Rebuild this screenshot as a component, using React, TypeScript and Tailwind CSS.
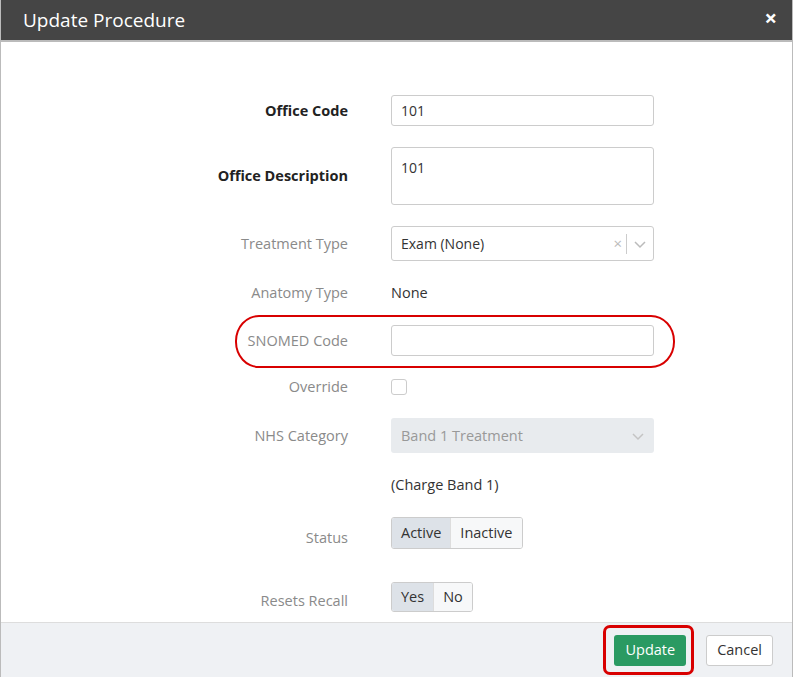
import React from "react";

const Row = ({ label, bold, h, lt = 0, mt = 0, children }: { label: string; bold?: boolean; h: number; lt?: number; mt?: number; children: React.ReactNode }) => (
  <div className="flex items-center" style={{ height: h, marginTop: mt }}>
    <div className={`w-[347px] text-right text-[14.5px] ${bold ? "font-bold text-[#222]" : "text-[#8a8a8a]"}`} style={{ marginTop: lt }}>{label}</div>
    <div className="ml-[43px] w-[263px] h-full flex items-center">{children}</div>
  </div>
);

export default function App() {
  return (
    <div className="w-[793px] h-[677px] flex flex-col bg-white border-x border-[#bbb] text-[#333]" style={{ fontFamily: '"Open Sans", sans-serif' }}>
      <div className="h-[42px] bg-[#454545] border-b-2 border-[#bbb] flex items-center justify-between pl-[22px] pr-[15px] shrink-0">
        <span className="text-white text-[19px]">Update Procedure</span>
        <span className="text-white text-[22px] font-bold leading-none -mt-[6px]">×</span>
      </div>
      <div className="relative flex-1 flex flex-col gap-[21px] pt-[53px]">
        <Row label="Office Code" bold h={31}>
          <div className="w-full h-full border border-[#ccc] rounded-[3px] px-[9px] flex items-center text-[14px]">101</div>
        </Row>
        <Row label="Office Description" bold h={58}>
          <div className="w-full h-full border border-[#ccc] rounded-[3px] px-[9px] pt-[9px] text-[14px]">101</div>
        </Row>
        <Row label="Treatment Type" h={35}>
          <div className="w-full h-full border border-[#ccc] rounded-[3px] pl-[9px] flex items-center text-[14px]">
            <span className="flex-1">Exam (None)</span>
            <span className="text-[#bbb] text-[15px] px-[4px]">×</span>
            <span className="w-px h-[20px] bg-[#ccc]" />
            <svg width="26" height="12" viewBox="0 0 26 12"><path d="M8 4l5 5 5-5" stroke="#bbb" strokeWidth="1.5" fill="none" /></svg>
          </div>
        </Row>
        <Row label="Anatomy Type" h={22}>
          <span className="text-[14.5px]">None</span>
        </Row>
        <Row label="SNOMED Code" h={31}>
          <div className="w-full h-full border border-[#ccc] rounded-[3px]" />
        </Row>
        <Row label="Override" h={20}>
          <div className="w-[16px] h-[16px] border border-[#ccc] rounded-[3px]" />
        </Row>
        <Row label="NHS Category" h={35}>
          <div className="w-full h-full bg-[#e8ebee] rounded-[3px] pl-[10px] pr-[8px] flex items-center text-[14.5px] text-[#999]">
            <span className="flex-1">Band 1 Treatment</span>
            <svg width="16" height="12" viewBox="0 0 16 12"><path d="M3 4l5 5 5-5" stroke="#c4c4c4" strokeWidth="1.5" fill="none" /></svg>
          </div>
        </Row>
        <Row label="" h={22}>
          <span className="text-[14.5px]">(Charge Band 1)</span>
        </Row>
        <Row label="Status" h={32} lt={10}>
          <div className="flex h-full border border-[#ccc] rounded-[3px] overflow-hidden text-[14.5px]">
            <span className="px-[9px] bg-[#dde2e8] flex items-center">Active</span>
            <span className="px-[9px] bg-[#f7f8f9] border-l border-[#ddd] flex items-center">Inactive</span>
          </div>
        </Row>
        <Row label="Resets Recall" h={30} lt={8} mt={12}>
          <div className="flex h-full border border-[#ccc] rounded-[3px] overflow-hidden text-[14.5px]">
            <span className="px-[9px] bg-[#dde2e8] flex items-center">Yes</span>
            <span className="px-[9px] bg-[#f7f8f9] border-l border-[#ddd] flex items-center">No</span>
          </div>
        </Row>
        <div className="absolute left-[234px] top-[273px] w-[440px] h-[53px] border-2 border-[#d80000] rounded-[24px/26px]" />
      </div>
      <div className="h-[55px] shrink-0 bg-[#eff1f4] border-t border-[#ddd] flex items-center justify-end pr-[19px] gap-[20px]">
        <div className="relative">
          <button className="h-[31px] px-[11px] bg-[#2a9a62] text-white text-[14.5px] rounded-[3px]">Update</button>
          <div className="absolute -left-[11px] -top-[10px] w-[91px] h-[50px] border-[3px] border-[#d80000] rounded-[7px]" />
        </div>
        <button className="h-[31px] px-[10px] bg-white border border-[#ccc] text-[14.5px] rounded-[3px]">Cancel</button>
      </div>
    </div>
  );
}
